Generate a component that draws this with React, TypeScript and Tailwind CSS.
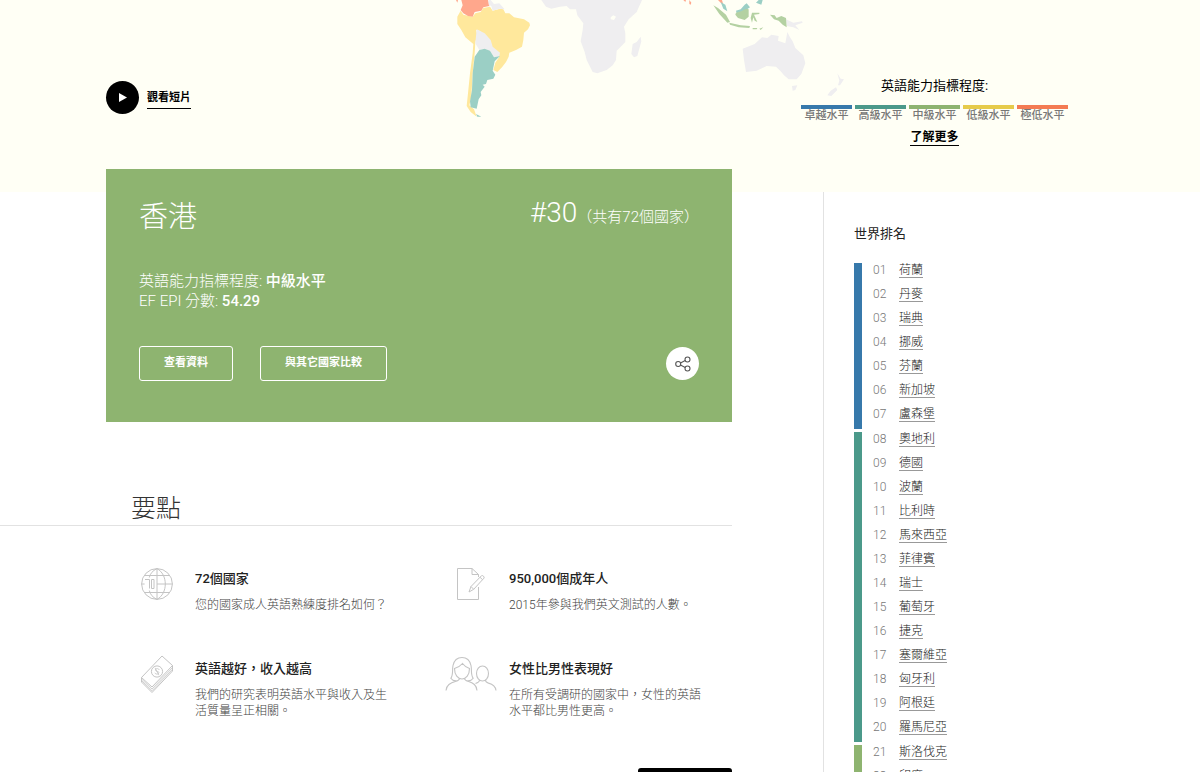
import type { ReactNode } from "react";

const levels = [
  { label: "卓越水平", bar: "bg-[#3779ab]" },
  { label: "高級水平", bar: "bg-[#4b998a]" },
  { label: "中級水平", bar: "bg-[#8eb470]" },
  { label: "低級水平", bar: "bg-[#e6cb4a]" },
  { label: "極低水平", bar: "bg-[#f47b53]" },
];

const rankGroups = [
  {
    start: 1,
    bar: "bg-[#3779ab]",
    countries: ["荷蘭", "丹麥", "瑞典", "挪威", "芬蘭", "新加坡", "盧森堡"],
  },
  {
    start: 8,
    bar: "bg-[#4b998a]",
    countries: [
      "奧地利", "德國", "波蘭", "比利時", "馬來西亞", "菲律賓", "瑞士",
      "葡萄牙", "捷克", "塞爾維亞", "匈牙利", "阿根廷", "羅馬尼亞",
    ],
  },
  {
    start: 21,
    bar: "bg-[#8eb470]",
    countries: ["斯洛伐克", "印度"],
  },
];

function WorldMap() {
  return (
    <svg className="absolute top-0 left-[440px] w-[420px] h-[130px]" viewBox="0 0 1260 390" aria-hidden="true">
      <path
        fill="#ffe89c"
        d="M62 32 70 44 98 50 106 40 122 36 130 24 150 20 158 32 180 26 190 28 196 40 208 40 222 52 252 58 268 68 270 76 264 88 252 98 250 120 246 140 228 150 208 158 206 170 198 186 186 202 172 216 160 210 166 188 178 170 172 160 158 148 154 132 134 104 118 92 108 90 112 104 106 126 104 160 98 220 94 290 88 316 102 328 110 350 92 336 80 318 84 280 90 220 98 160 100 132 76 112 64 90 52 72 52 50Z"
      />
      <path
        fill="#ffa78c"
        d="M64 0 144 0 148 18 130 22 124 32 104 36 98 50 84 48 70 40 62 30 68 16ZM48 0 54 0 52 8ZM730 0 738 0 736 6ZM748 0 754 8 752 14 748 12ZM834 0 846 0 850 14 842 8Z"
      />
      <g fill="#efeef0">
        <path d="M152 0 162 12 178 10 194 28 178 26 158 32 154 18 146 14 146 0Z" />
        <path d="M110 88 122 94 134 100 152 120 158 140 180 158 178 168 162 172 150 152 134 146 118 150 106 130Z" />
        <path d="M304 0 318 20 334 26 360 20 380 18 390 28 408 28 412 46 430 70 428 90 422 124 434 156 440 180 458 216 472 220 500 210 518 196 528 180 530 152 542 140 556 126 556 100 552 80 566 58 590 36 606 0Z" />
        <path d="M602 110 604 124 592 168 582 172 574 162 578 132 590 126Z" />
        <path d="M908 146 944 132 966 112 982 114 994 104 1016 108 1014 122 1036 130 1042 96 1050 112 1058 124 1066 144 1090 166 1096 190 1084 222 1070 238 1046 238 1032 226 1022 214 1008 200 980 198 950 212 918 216 912 180Z" />
        <path d="M1056 258 1072 256 1066 270 1058 272Z" />
        <path d="M1192 220 1202 236 1212 238 1200 256 1194 256 1198 242ZM1188 262 1192 270 1174 288 1162 286 1172 272Z" />
        <path d="M1038 58 1060 68 1086 64 1088 68 1066 76 1078 90 1060 82 1040 78Z" />
      </g>
      <path fill="#fffff5" d="M512 52 520 46 528 50 522 60 512 58Z" />
      <path
        fill="#9bcfc5"
        d="M118 150 134 146 150 152 162 172 180 168 164 184 158 212 166 224 160 236 142 240 138 252 128 254 134 260 122 276 124 286 116 298 110 326 92 322 90 304 96 270 98 220 104 170ZM108 342 124 350 112 350ZM842 6 856 14 862 34 850 26ZM888 32 902 28 914 14 920 10 930 22 918 30 904 36 890 40ZM956 0 968 0 964 14 948 8Z"
      />
      <path
        fill="#b4d1a2"
        d="M820 16 834 24 858 44 870 66 862 68 838 42ZM868 68 902 76 930 78 928 84 896 82 870 74ZM888 38 904 34 918 26 926 28 926 50 914 60 894 54 886 44ZM936 38 958 38 958 42 942 44 952 66 944 62 940 52 936 68 932 54ZM990 44 1004 46 1010 54 1024 48 1038 54 1040 82 1028 74 1016 62 1002 58ZM938 84 952 84 950 88 938 88ZM958 86 970 82 962 90Z"
      />
    </svg>
  );
}

function GlobeIcon() {
  return (
    <svg width="34" height="34" viewBox="0 0 34 34" fill="none" stroke="#c4c4c4">
      <circle cx="17" cy="17" r="15.4" />
      <path d="M17 1.600v30.800M17 17h15.400M1.600 17h3M4.500 8.500h25M4.500 25.500h25" />
      <path d="M17 1.600C12.500 3.800 10.300 6.500 9.300 10.500M9.300 23.500c1 4 3.200 6.700 7.700 8.900M17 1.600c5.500 3 8.300 9 8.300 15.400S22.500 29.400 17 32.400" />
      <path d="M5 12.500h4.500v9M11.500 12.500v9M11.500 12.500H14v9h-2.500" />
    </svg>
  );
}

function PaperIcon() {
  return (
    <svg width="30" height="34" viewBox="0 0 30 34" fill="none" stroke="#c4c4c4">
      <path d="M22.500 10V7.500L16 1.500H1.500v31h21V20M16 1.500v6h6.500" />
      <path d="m13 25 2-5.500L25.500 8.700c1-.9 3.400 1.300 2.500 2.400L17.700 22.300zM24 10.300l2.600 2.400M15 19.500l2.700 2.800" />
    </svg>
  );
}

function MoneyIcon() {
  return (
    <svg width="34" height="40" viewBox="0 0 34 40" fill="none" stroke="#c4c4c4">
      <path d="M1.500 23.500 22 2l10.500 9.500L12 33z" />
      <path d="M1.500 23.500V28L12 38.500 32.500 17v-5.500" />
      <path d="M1.500 25 12 35l20.500-21.500M1.500 26.500 12 36.800l20.500-21.500" strokeWidth=".8" />
      <circle cx="17" cy="17.500" r="5.600" />
      <path d="M19.300 16c-.5-2-4-1.900-3.900.1.100 1.700 3.500.7 3.500 2.600 0 1.900-3.500 2-4.100.1M15 13.800l4 7.500" strokeWidth=".8" />
    </svg>
  );
}

function PeopleIcon() {
  return (
    <svg width="52" height="36" viewBox="0 0 52 36" fill="none" stroke="#c4c4c4" strokeWidth="1.100">
      <path d="M1 34.500c.5-5.500 4-7.500 10-9.200 2.500-.7 3.500-1.500 3.500-3M32 34.500c-.5-5.500-3.500-7.500-9-9.200-2.500-.7-3.500-1.500-3.500-3" />
      <path d="M9.500 12.500c0 6.500 3.500 10.500 7.500 10.500s7.500-4 7.500-10.500C21.500 11.500 19 9.500 17.500 7.500c-2 2.500-5 4-8 5z" />
      <path d="M11.500 24.800c-2.500.2-4.500-.7-5.700-2.500C8.500 19 7 14.500 8 9.500 9.200 4 12.500 1.500 17 1.500s7.800 2.500 9 8c1 5-.5 9.500 2.200 12.800-1.200 1.800-3.200 2.700-5.700 2.500" />
      <ellipse cx="37.500" cy="17.500" rx="6" ry="7.500" />
      <path d="M30.500 27.500c3-1 4-1.700 4-3.500M40.500 24c0 1.800 1 2.500 3 3.100 4.500 1.200 7 3 7.500 7.400" />
    </svg>
  );
}

const highlights: { title: string; text: string; icon: ReactNode }[] = [
  { title: "72個國家", text: "您的國家成人英語熟練度排名如何？", icon: <GlobeIcon /> },
  { title: "950,000個成年人", text: "2015年參與我們英文測試的人數。", icon: <PaperIcon /> },
  { title: "英語越好，收入越高", text: "我們的研究表明英語水平與收入及生活質量呈正相關。", icon: <MoneyIcon /> },
  { title: "女性比男性表現好", text: "在所有受調研的國家中，女性的英語水平都比男性更高。", icon: <PeopleIcon /> },
];

function Hero() {
  return (
    <header className="relative h-48 bg-[#fffff5]">
      <WorldMap />
      <div className="relative flex justify-between pt-[78px] pl-[106px] pr-[11%]">
        <a href="#video" className="flex items-center gap-2 h-[38px]">
          <span className="flex items-center justify-center size-[33px] rounded-full bg-black">
            <svg width="8" height="9" viewBox="0 0 8 9" fill="#fff">
              <path d="M0 0l8 4.500L0 9z" />
            </svg>
          </span>
          <span className="pt-0.5 border-b border-black text-[11px] leading-5 font-bold">觀看短片</span>
        </a>
        <div className="text-center">
          <p className="text-[13px] leading-4">英語能力指標程度:</p>
          <ul className="mt-[11px] flex gap-[3px]">
            {levels.map((level) => (
              <li key={level.label} className="w-[51px]">
                <div className={`h-1 ${level.bar}`} />
                <span className="block text-[11px] leading-[13px] font-medium text-[#777]">{level.label}</span>
              </li>
            ))}
          </ul>
          <a href="#levels" className="mt-[7px] inline-block border-b border-black text-[12px] leading-4 font-bold">
            了解更多
          </a>
        </div>
      </div>
    </header>
  );
}

function CountryCard() {
  return (
    <section className="ml-[106px] -mt-[23px] relative bg-[#8eb470] px-[33px] pt-7 pb-[41px] text-white font-light">
      <div className="flex items-start justify-between">
        <h1 className="text-[29px] leading-10">香港</h1>
        <p className="text-[15px] leading-8">
          <span className="text-[28px]">#30</span>（共有72個國家）
        </p>
      </div>
      <p className="mt-[34px] text-[15px] leading-5">
        英語能力指標程度: <strong className="font-medium">中級水平</strong>
        <br />
        EF EPI 分數: <strong className="font-medium">54.29</strong>
      </p>
      <div className="mt-[35px] flex items-center">
        <button type="button" className="h-[35px] px-6 rounded-[3px] border border-white text-[11px] font-bold">
          查看資料
        </button>
        <button type="button" className="ml-[27px] h-[35px] px-6 rounded-[3px] border border-white text-[11px] font-bold">
          與其它國家比較
        </button>
        <button type="button" aria-label="分享" className="ml-auto flex items-center justify-center size-[33px] rounded-full bg-white">
          <svg width="16" height="16" viewBox="0 0 16 16" fill="none" stroke="#555" strokeWidth="1.100">
            <circle cx="3.200" cy="8" r="2.500" />
            <circle cx="12.500" cy="3.500" r="2.500" />
            <circle cx="12.500" cy="12.500" r="2.500" />
            <path d="M5.500 7 10.200 4.600M5.500 9l4.700 2.400" />
          </svg>
        </button>
      </div>
    </section>
  );
}

function Highlights() {
  return (
    <section>
      <h2 className="mt-[70px] pl-[131px] border-b border-[#e2e2e2] text-[25px] leading-[33px] font-light text-[#333]">
        要點
      </h2>
      <div className="pt-10 pl-[131px] grid grid-cols-[314px_1fr] gap-y-6">
        {highlights.map((item) => (
          <div key={item.title} className="flex gap-3 min-h-[66px]">
            <div className="flex w-[52px] h-9 shrink-0 items-center justify-center">{item.icon}</div>
            <div className="w-[192px] shrink-0 pt-[3px]">
              <h3 className="text-[13px] leading-5 font-medium text-[#222]">{item.title}</h3>
              <p className="mt-2 text-[12px] leading-4 font-light text-[#444]">{item.text}</p>
            </div>
          </div>
        ))}
      </div>
      <div className="mt-[46px] flex justify-end">
        <button type="button" aria-label="下載" className="h-9 w-[94px] rounded-[3px] bg-black" />
      </div>
    </section>
  );
}

function Ranking() {
  return (
    <aside className="flex-1 ml-[91px] border-l border-[#e2e2e2] pl-[30px] pt-8">
      <h2 className="text-[13px] leading-5 font-normal text-[#222]">世界排名</h2>
      <div className="mt-[19px] flex flex-col gap-[3px]">
        {rankGroups.map((group) => (
          <div key={group.start} className="flex">
            <div className={`w-2 ${group.bar}`} />
            <ol className="ml-[11px] -mb-0.5 text-[12px] leading-[14px]">
              {group.countries.map((country, i) => (
                <li key={country} className="flex h-6 items-start">
                  <span className="w-[26px] font-light text-[#777]">{String(group.start + i).padStart(2, "0")}</span>
                  <a href="#country" className="border-b border-[#999] font-light text-[#222]">
                    {country}
                  </a>
                </li>
              ))}
            </ol>
          </div>
        ))}
      </div>
    </aside>
  );
}

export default function App() {
  return (
    <div lang="zh-Hant" className="bg-white text-black font-[Roboto,'Noto_Sans_CJK_TC',sans-serif]">
      <Hero />
      <main className="flex">
        <div className="w-[61%]">
          <CountryCard />
          <Highlights />
        </div>
        <Ranking />
      </main>
    </div>
  );
}
